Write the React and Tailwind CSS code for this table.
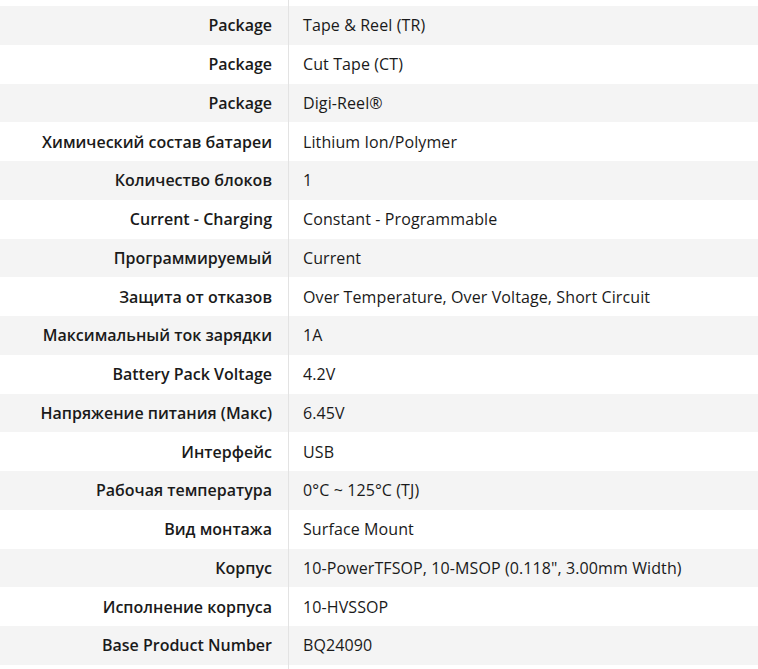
import React from "react";

const rows = [
  ["Package", "Tape & Reel (TR)"],
  ["Package", "Cut Tape (CT)"],
  ["Package", "Digi-Reel®"],
  ["Химический состав батареи", "Lithium Ion/Polymer"],
  ["Количество блоков", "1"],
  ["Current - Charging", "Constant - Programmable"],
  ["Программируемый", "Current"],
  ["Защита от отказов", "Over Temperature, Over Voltage, Short Circuit"],
  ["Максимальный ток зарядки", "1A"],
  ["Battery Pack Voltage", "4.2V"],
  ["Напряжение питания (Макс)", "6.45V"],
  ["Интерфейс", "USB"],
  ["Рабочая температура", "0°C ~ 125°C (TJ)"],
  ["Вид монтажа", "Surface Mount"],
  ["Корпус", "10-PowerTFSOP, 10-MSOP (0.118\", 3.00mm Width)"],
  ["Исполнение корпуса", "10-HVSSOP"],
  ["Base Product Number", "BQ24090"],
];

export default function App() {
  return (
    <div
      className="w-[758px] h-[669px] overflow-hidden bg-white text-[16px] text-[#1a1a1a]"
      style={{ fontFamily: '"Open Sans", "Noto Sans", sans-serif' }}
    >
      <div className="flex h-[6px]">
        <div className="w-[289px] border-r border-[#e3e3e3]" />
        <div className="flex-1" />
      </div>
      {rows.map(([k, v], i) => (
        <div
          key={i}
          className={`flex h-[38.76px] ${i % 2 === 0 ? "bg-[#f4f4f4]" : "bg-white"}`}
        >
          <div className="w-[289px] shrink-0 border-r border-[#e3e3e3] flex items-center justify-end pr-[16px] font-semibold whitespace-nowrap">
            {k}
          </div>
          <div className="flex-1 flex items-center pl-[14px] whitespace-nowrap tracking-[0.1px]">
            {v}
          </div>
        </div>
      ))}
      <div className="flex h-[20px]">
        <div className="w-[289px] border-r border-[#e3e3e3]" />
        <div className="flex-1" />
      </div>
    </div>
  );
}
